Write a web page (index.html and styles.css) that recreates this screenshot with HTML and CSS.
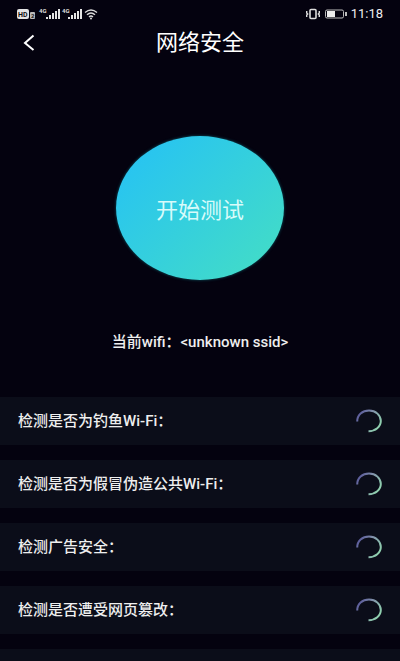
FILE: index.html
```html
<!DOCTYPE html>
<html lang="zh-CN">
<head>
  <meta charset="UTF-8" />
  <meta name="viewport" content="width=device-width, initial-scale=1.0"/>
  <title>网络安全</title>
  <link rel="stylesheet" href="styles.css">
</head>
<body>

  <svg class="defs" width="0" height="0" aria-hidden="true">
    <defs>
      <linearGradient id="ring" x1="0" y1="0" x2="1" y2="0.6">
        <stop offset="0" stop-color="#4f4a96"/>
        <stop offset="0.5" stop-color="#8292ab"/>
        <stop offset="1" stop-color="#8fcfae"/>
      </linearGradient>
      <symbol id="spinner" viewBox="0 0 26 24">
        <path d="M1.2 12.5C1.2 6 6.3 1.6 13 1.6S24.8 6.2 24.8 12 19.5 22.2 12.5 22.2" fill="none" stroke="url(#ring)" stroke-width="2"/>
      </symbol>
    </defs>
  </svg>

  <div class="app">
    <div class="status-bar">
      <div class="status-group">
        <svg class="signals" width="82" height="14" viewBox="0 0 82 14">
          <rect x="0" y="2" width="12" height="10" rx="2" fill="#e4e4e4"/>
          <text class="hd" x="1" y="10">HD</text>
          <rect x="13" y="5" width="5" height="7" rx="1" fill="#bbb"/>
          <text class="sim" x="14" y="11">2</text>
          <text class="net" x="22" y="6">4G</text>
          <text class="net" x="45" y="6">4G</text>
          <g fill="#e4e4e4">
            <path d="M29 10h2v2h-2zM32 8h2v4h-2zM35 6h2v6h-2zM38 4h2v8h-2zM41 2h2v10h-2z"/>
            <path d="M51 10h2v2h-2zM54 8h2v4h-2zM57 6h2v6h-2zM60 4h2v8h-2zM63 2h2v10h-2z"/>
          </g>
          <g fill="none" stroke="#ddd" stroke-width="1.4">
            <path d="M68 5.5q6-5 12 0M70 7.8q4-3.500 8 0M72 10q2-1.800 4 0"/>
          </g>
          <circle cx="74" cy="11.5" r="1" fill="#ddd"/>
        </svg>
      </div>
      <div class="status-group">
        <svg width="42" height="12" viewBox="0 0 42 12">
          <rect x="4" y="1.5" width="6" height="9" rx="1" fill="none" stroke="#ddd" stroke-width="1.6"/>
          <path d="M.7 3v2l1 1-1 1v2M13.3 3v2l-1 1 1 1v2" fill="none" stroke="#ddd" stroke-width="1.4"/>
          <rect x="19.500" y="2" width="18" height="8" rx="1.500" fill="none" stroke="#bbb"/>
          <rect x="21" y="3" width="8" height="6" fill="#eee"/>
          <path d="M40 4v4" stroke="#bbb" stroke-width="2"/>
        </svg>
        <span class="clock">11:18</span>
      </div>
    </div>

    <header class="title-bar">
      <button class="back" type="button" aria-label="返回">
        <svg width="12" height="18" viewBox="0 0 12 18">
          <path d="M10.5 1.500L2 9l8.500 7" fill="none" stroke="#fff" stroke-width="2"/>
        </svg>
      </button>
      <h1>网络安全</h1>
    </header>

    <main>
      <button class="start" type="button">开始测试</button>
      <p class="ssid">当前wifi：&lt;unknown ssid&gt;</p>

      <ul class="checks">
        <li><span>检测是否为钓鱼Wi-Fi：</span><svg class="spinner"><use href="#spinner"/></svg></li>
        <li><span>检测是否为假冒伪造公共Wi-Fi：</span><svg class="spinner"><use href="#spinner"/></svg></li>
        <li><span>检测广告安全：</span><svg class="spinner"><use href="#spinner"/></svg></li>
        <li><span>检测是否遭受网页篡改：</span><svg class="spinner"><use href="#spinner"/></svg></li>
        <li><span></span><svg class="spinner"><use href="#spinner"/></svg></li>
      </ul>
    </main>
  </div>

</body>
</html>
```

FILE: styles.css
```css
body {
  margin: 0;
  background: #04020f;
  color: #eee;
  font-family: Roboto, "Noto Sans CJK SC", sans-serif;
}
button {
  border: none;
  padding: 0;
  font-family: inherit;
  cursor: pointer;
}
.defs {
  display: block;
}
.app {
  height: 100vh;
  overflow: hidden;
}
.status-bar {
  display: flex;
  justify-content: space-between;
  align-items: center;
  height: 27px;
  padding: 0 17px;
}
.status-group {
  display: flex;
  align-items: center;
  gap: 3px;
}
.signals text {
  font-weight: 700;
}
.hd {
  font-size: 7px;
  fill: #111;
}
.sim {
  font-size: 6px;
  fill: #111;
}
.net {
  font-size: 6px;
  fill: #ddd;
}
.clock {
  font-size: 13px;
  line-height: 16px;
}
.title-bar {
  display: grid;
  grid-template-columns: 24px 1fr 24px;
  align-items: center;
  height: 32px;
  padding: 0 17px;
}
.back {
  display: flex;
  justify-content: center;
  background: none;
}
h1 {
  margin: 0;
  text-align: center;
  font-size: 22px;
  line-height: 32px;
  font-weight: 400;
  color: #fff;
}
.start {
  display: block;
  width: 168px;
  height: 144px;
  margin: 77px auto 0;
  border-radius: 50%;
  background: linear-gradient(135deg, #29c5ef 15%, #40dacb 85%);
  box-shadow: 0 0 3px #0b5a66;
  color: #d8fbfa;
  font-size: 22px;
}
.ssid {
  margin: 50px 0 43px;
  text-align: center;
  font-size: 15px;
  line-height: 24px;
  font-weight: 500;
}
.checks {
  display: grid;
  gap: 15px;
  margin: 0;
  padding: 0;
  list-style: none;
}
.checks li {
  display: flex;
  justify-content: space-between;
  align-items: center;
  height: 48px;
  padding: 0 18px;
  background: #0b0d19;
  font-size: 15px;
  line-height: 24px;
  font-weight: 500;
}
.spinner {
  width: 26px;
  height: 24px;
}
```
